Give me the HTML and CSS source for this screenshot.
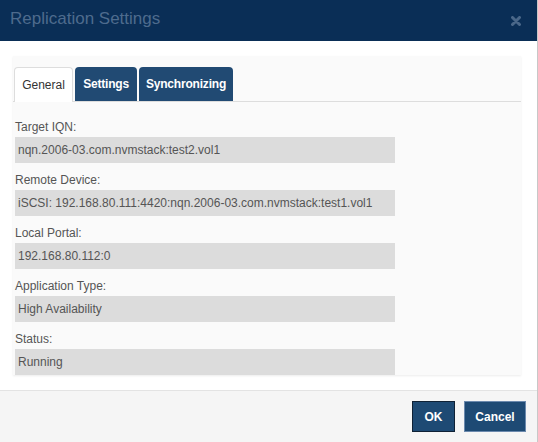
FILE: index.html
```html
<!DOCTYPE html>
<html>
<head>
<meta charset="utf-8">
<link rel="stylesheet" href="styles.css">
</head>
<body>
<div class="modal">
  <div class="header">
    <div class="title">Replication Settings</div>
    <svg class="close" width="10" height="10" viewBox="0 0 10 10"><path d="M1.5 1.5 L8.5 8.5 M8.5 1.5 L1.5 8.5" stroke="#4a6789" stroke-width="3" stroke-linecap="round"/></svg>
  </div>
  <div class="body">
    <div class="panel">
      <div class="tabs">
        <div class="tab active">General</div>
        <div class="tab settings">Settings</div>
        <div class="tab sync">Synchronizing</div>
      </div>
      <div class="fields">
        <div class="field"><div class="label">Target IQN:</div><div class="value">nqn.2006-03.com.nvmstack:test2.vol1</div></div>
        <div class="field"><div class="label">Remote Device:</div><div class="value">iSCSI: 192.168.80.111:4420:nqn.2006-03.com.nvmstack:test1.vol1</div></div>
        <div class="field"><div class="label">Local Portal:</div><div class="value">192.168.80.112:0</div></div>
        <div class="field"><div class="label">Application Type:</div><div class="value">High Availability</div></div>
        <div class="field"><div class="label">Status:</div><div class="value">Running</div></div>
      </div>
    </div>
  </div>
  <div class="footer">
    <button class="btn ok">OK</button>
    <button class="btn cancel">Cancel</button>
  </div>
</div>
</body>
</html>
```
FILE: styles.css
```css
html, body { margin: 0; padding: 0; background: #fff; }
body { font-family: "Liberation Sans", Arial, sans-serif; }
.modal {
  width: 537px;
  height: 442px;
  border-right: 1px solid #c8c8c8;
  display: flex;
  flex-direction: column;
  background: #fff;
}
.header {
  height: 41px;
  background: #0a2e56;
  display: flex;
  align-items: center;
  justify-content: space-between;
  padding: 0 16px 0 10px;
  flex: none;
}
.title {
  color: #4e6b8d;
  font-size: 17px;
  margin-top: -4px;
}
.body {
  padding: 15px 16px 15px 13px;
  flex: none;
}
.panel {
  background: #fafafa;
  box-shadow: 0 1px 2px rgba(0,0,0,0.08);
  padding-top: 11px;
}
.tabs {
  display: flex;
  gap: 2px;
  border-bottom: 1px solid #dddddd;
  height: 34px;
  padding-left: 1px;
}
.tab {
  height: 34px;
  box-sizing: border-box;
  display: flex;
  align-items: center;
  justify-content: center;
  border-radius: 4px 4px 0 0;
  background: #214a73;
  color: #fff;
  font-weight: bold;
  font-size: 12px;
  letter-spacing: -0.2px;
}
.tab.active {
  width: 59px;
  background: #fff;
  color: #333;
  font-weight: normal;
  letter-spacing: 0;
  border: 1px solid #dddddd;
  border-bottom: none;
  height: 35px;
}
.tab.settings { width: 62px; }
.tab.sync { width: 94px; }
.fields { padding-top: 8px; padding-left: 2px; }
.label {
  font-size: 12px;
  color: #555;
  line-height: 16px;
  padding: 9px 0 2px;
}
.value {
  width: 380px;
  height: 26px;
  box-sizing: border-box;
  background: #dcdcdc;
  color: #555;
  font-size: 12px;
  line-height: 26px;
  padding-left: 3px;
}
.footer {
  flex: 1;
  background: #f5f5f5;
  border-top: 1px solid #e3e3e3;
  display: flex;
  justify-content: flex-end;
  align-items: flex-start;
  gap: 9px;
  padding: 10px 11px 0 0;
}
.btn {
  height: 31px;
  background: #1e4a74;
  color: #fff;
  font-family: "Liberation Sans", Arial, sans-serif;
  font-weight: bold;
  font-size: 12px;
  border-radius: 0;
  margin: 0;
  cursor: pointer;
}
.ok { width: 43px; border: 1px solid #0f2135; }
.cancel { width: 62px; border: 1px solid #6b89ad; }
```
